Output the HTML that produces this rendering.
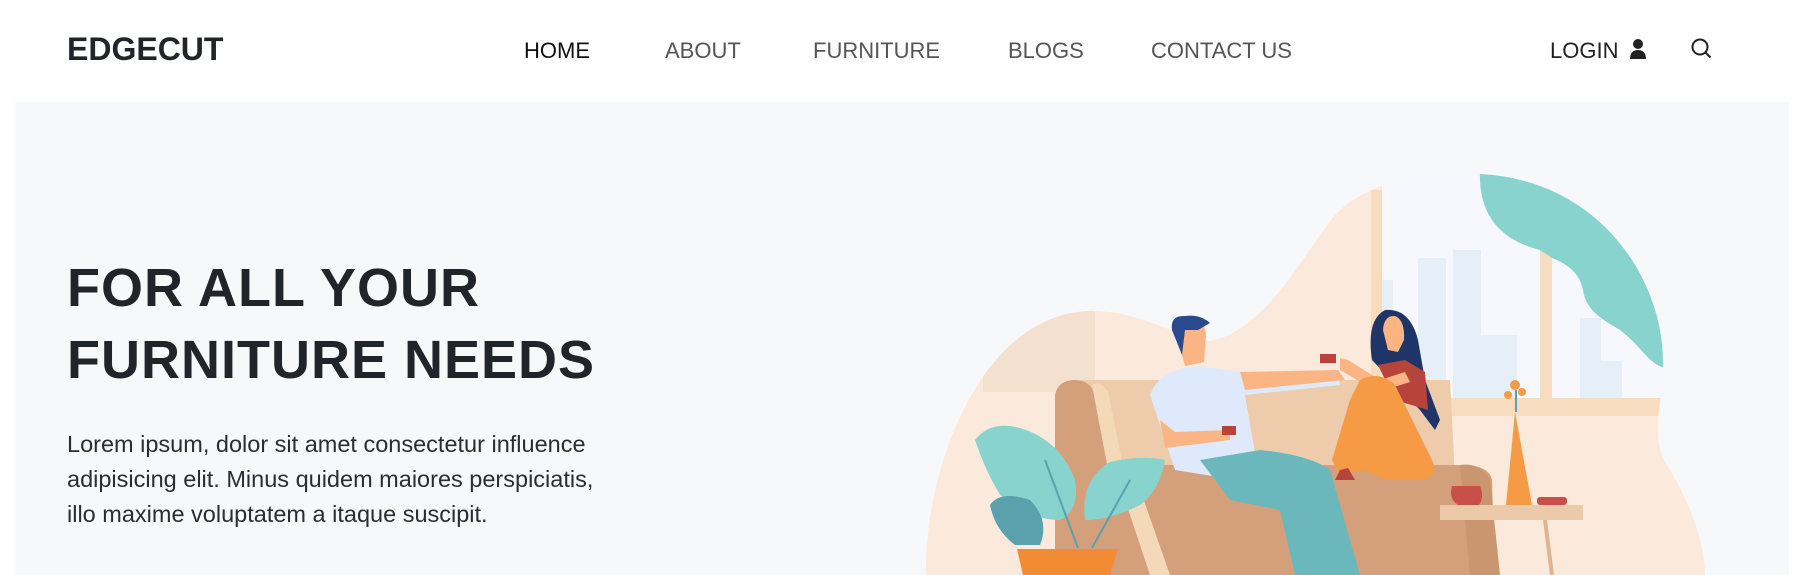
<!DOCTYPE html>
<html><head><meta charset="utf-8"><style>
*{margin:0;padding:0;box-sizing:border-box}
body{width:1803px;height:575px;overflow:hidden;background:#fff;font-family:"Liberation Sans",sans-serif;color:#212529;position:relative}
.abs{position:absolute;white-space:nowrap}
.logo{left:67px;top:31px;font-size:32px;font-weight:bold;letter-spacing:0px;color:#212529}
.nav{top:38px;font-size:22px;color:#555}
.hero{position:absolute;left:15px;top:102px;width:1774px;height:473px;background:#f7f8fa}
h1{position:absolute;left:67px;top:252px;font-size:54px;line-height:72px;font-weight:bold;color:#212529;letter-spacing:1px}
p{position:absolute;left:67px;top:427px;font-size:23.5px;line-height:35px;color:#2a2d31}
</style></head><body>
<div class="abs logo">EDGECUT</div>
<div class="abs nav" style="left:524px;color:#111">HOME</div>
<div class="abs nav" style="left:665px">ABOUT</div>
<div class="abs nav" style="left:813px">FURNITURE</div>
<div class="abs nav" style="left:1008px">BLOGS</div>
<div class="abs nav" style="left:1151px">CONTACT US</div>
<div class="abs nav" style="left:1550px;color:#222">LOGIN</div>
<svg class="abs" style="left:1628px;top:38px" width="20" height="22" viewBox="0 0 20 22"><circle cx="10" cy="6" r="5" fill="#222"/><path d="M2 21c0-6 3-9 8-9s8 3 8 9z" fill="#222"/></svg>
<svg class="abs" style="left:1690px;top:37px" width="24" height="24" viewBox="0 0 24 24"><circle cx="10" cy="10" r="7.5" fill="none" stroke="#222" stroke-width="2"/><path d="M15.5 15.5l5 5" stroke="#222" stroke-width="2"/></svg>
<div class="hero"></div>
<h1>FOR ALL YOUR<br>FURNITURE NEEDS</h1>
<p>Lorem ipsum, dolor sit amet consectetur influence<br>adipisicing elit. Minus quidem maiores perspiciatis,<br>illo maxime voluptatem a itaque suscipit.</p>
<svg class="abs" style="left:0;top:0" width="1803" height="575" viewBox="0 0 1803 575">
<defs><clipPath id="b"><path d="M926 575C924 470 980 315 1089 311C1140 310 1170 335 1210 341C1270 330 1310 240 1340 210C1380 175 1440 172 1480 174C1600 180 1665 280 1663 367C1660 420 1650 440 1670 470C1700 520 1705 560 1705 575Z"/></clipPath></defs>
<path d="M926 575C924 470 980 315 1089 311C1140 310 1170 335 1210 341C1270 330 1310 240 1340 210C1380 175 1440 172 1480 174C1600 180 1665 280 1663 367C1660 420 1650 440 1670 470C1700 520 1705 560 1705 575Z" fill="#fbeadb"/>
<g clip-path="url(#b)">
<rect x="983" y="310" width="112" height="82" fill="#f3e0cf"/>
<rect x="1382" y="170" width="285" height="230" fill="#f6f8fd"/>
<rect x="1382" y="280" width="11" height="118" fill="#e6eef8"/>
<rect x="1418" y="258" width="28" height="140" fill="#e6eef8"/>
<rect x="1453" y="250" width="28" height="148" fill="#e6eef8"/>
<rect x="1481" y="335" width="36" height="63" fill="#e6eef8"/>
<rect x="1580" y="318" width="21" height="80" fill="#e6eef8"/>
<rect x="1601" y="361" width="21" height="37" fill="#e6eef8"/>
<rect x="1371" y="190" width="11" height="226" fill="#f8dcc0"/>
<rect x="1540" y="180" width="12" height="222" fill="#f8dcc0"/>
<rect x="1371" y="398" width="290" height="18" fill="#f8dcc0"/>
<path d="M1480 170C1478 215 1500 240 1540 250L1552 258C1570 265 1580 275 1583 290C1586 310 1600 318 1620 330C1640 345 1650 365 1663 367L1663 320C1660 260 1620 200 1552 190L1552 185C1530 176 1505 170 1480 170Z" fill="#89d3ce"/>
</g>
<path d="M1065 390Q1068 380 1085 380L1450 380L1460 575L1060 575Z" fill="#edcbab"/>
<path d="M1055 395Q1058 380 1075 380Q1090 380 1095 395L1130 575L1055 575Z" fill="#d4a07c"/>
<path d="M1092 385Q1100 380 1108 392L1145 575L1128 575Z" fill="#f4d9b8"/>
<path d="M1090 475Q1100 465 1120 465L1470 465Q1490 468 1492 480L1495 575L1095 575Z" fill="#d4a07c"/>
<path d="M1115 470Q1125 465 1135 475L1170 575L1150 575Z" fill="#f4d9b8"/>
<path d="M1460 465Q1480 462 1490 480L1500 575L1470 575Z" fill="#c99670"/>
<path d="M1150 395Q1160 368 1200 366L1240 372L1338 372L1340 385L1245 395L1258 470L1225 478L1175 470Z" fill="#deeafc"/>
<path d="M1240 372L1338 370L1345 380L1245 390Z" fill="#fbb584"/>
<path d="M1160 420L1165 448L1230 440L1230 430L1175 432Z" fill="#fbb584"/>
<rect x="1222" y="426" width="14" height="9" fill="#b7443a"/>
<path d="M1200 460L1260 450Q1310 455 1330 470L1360 575L1295 575L1280 510L1230 500Z" fill="#6ab8bc"/>
<path d="M1178 340Q1176 320 1190 317Q1205 318 1206 335L1204 362L1185 366Z" fill="#fbb584"/>
<path d="M1172 330Q1170 315 1185 316Q1200 314 1210 323L1198 330L1185 330L1182 355Z" fill="#2a4a8f"/>
<path d="M1372 360Q1366 320 1385 310Q1410 308 1418 340L1425 380L1440 420L1435 430L1420 410Z" fill="#1f3567"/>
<path d="M1383 330Q1384 315 1395 316Q1405 320 1404 340L1398 352L1388 350Z" fill="#fbb584"/>
<path d="M1378 365L1405 360L1425 372L1428 410L1395 400Z" fill="#b7443a"/>
<path d="M1340 358L1348 360L1380 380L1405 372L1410 382L1378 392L1340 370Z" fill="#fbb584"/>
<rect x="1320" y="354" width="16" height="9" fill="#b7443a"/>
<path d="M1360 380Q1380 370 1395 385L1432 460Q1440 478 1420 480L1385 480L1365 470L1340 475L1332 460L1350 400Z" fill="#f59a45"/>
<path d="M1340 470L1348 468L1355 480L1335 480Z" fill="#b7443a"/>
<g fill="#89d3ce">
<path d="M975 440Q990 420 1020 428Q1060 440 1075 480Q1080 510 1060 520Q1030 520 1000 495Q985 470 975 440Z"/>
<path d="M1085 520Q1080 480 1110 462Q1140 455 1165 460Q1160 490 1140 505Q1110 520 1085 520Z"/>
</g>
<path d="M990 505Q1000 490 1030 500Q1050 520 1040 545L1015 545Q995 530 990 505Z" fill="#5aa1ad"/>
<path d="M1045 460L1078 548M1130 480L1092 548" stroke="#5aa1ad" stroke-width="2" fill="none"/>
<path d="M1017 549L1118 549L1110 575L1023 575Z" fill="#f28c34"/>
<path d="M1515 412L1506 505L1532 505Z" fill="#f59a45"/>
<circle cx="1515" cy="385" r="5" fill="#f59a45"/><circle cx="1508" cy="395" r="4" fill="#f59a45"/><circle cx="1522" cy="392" r="4" fill="#f59a45"/>
<path d="M1516 390L1516 412" stroke="#5aa1ad" stroke-width="2"/>
<path d="M1452 486Q1448 500 1460 506L1478 506Q1485 498 1480 486Z" fill="#c9504a"/>
<rect x="1537" y="497" width="30" height="8" rx="3" fill="#c9504a"/>
<rect x="1440" y="505" width="143" height="15" fill="#ecc9a8"/>
<path d="M1545 520L1552 575" stroke="#ddb590" stroke-width="4"/>
</svg>
</body></html>
